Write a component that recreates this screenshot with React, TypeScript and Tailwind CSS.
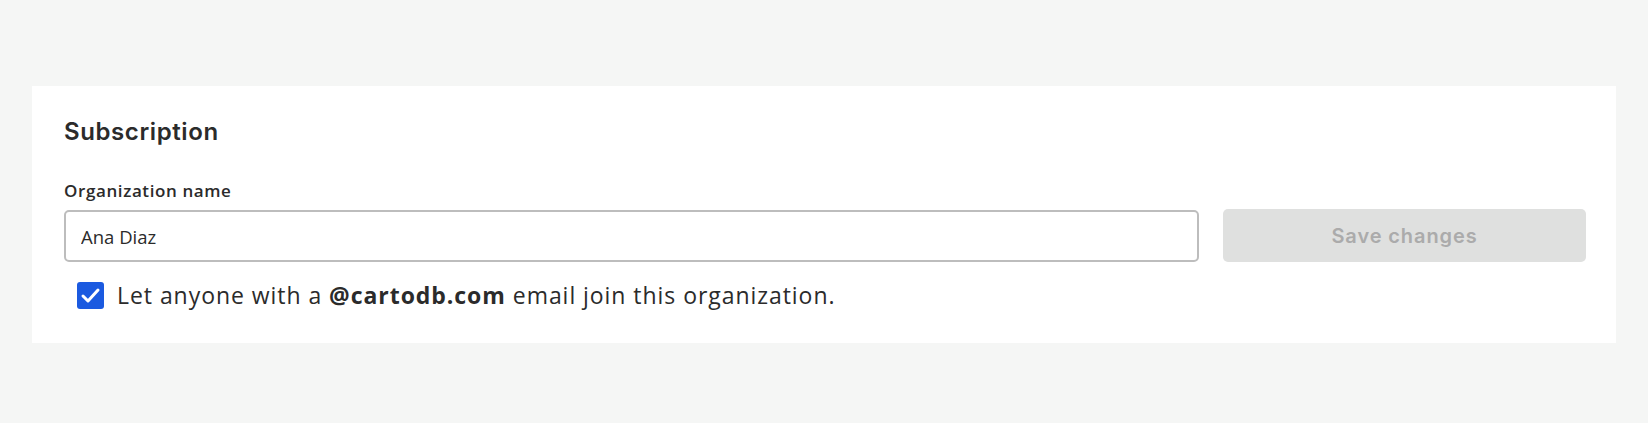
import React, { useState } from 'react';

const heading = { fontFamily: 'Inter, "Open Sans", sans-serif' };
const body = { fontFamily: '"Open Sans", "Noto Sans", sans-serif' };

export default function App() {
    const [name, setName] = useState('Ana Diaz');
    const [open, setOpen] = useState(true);

    return (
        <div className="min-h-screen bg-[#f5f6f5] px-8 pt-[86px] pb-20 text-[#2b2b2b]">
            <div className="bg-white pl-8 pr-[30px] pt-[30px] pb-[33px]">
                <h2 className="text-[24px] leading-[32px] font-semibold tracking-[0.6px]" style={heading}>Subscription</h2>

                <label className="block mt-[31px] text-[17px] leading-[24px] font-semibold tracking-[0.6px]" style={body}>Organization name</label>
                <div className="flex gap-6 mt-[7px]">
                    <input
                        value={name}
                        onChange={e => setName(e.target.value)}
                        className="flex-1 h-[52px] rounded-[5px] border-2 border-[#bdbdbd] px-[15px] text-[18.5px] text-[#2b2b2b] outline-none"
                        style={body}
                    />
                    <button disabled className="w-[363px] h-[53px] -mt-px rounded-[5px] bg-[#dfe0df] text-[20px] font-semibold tracking-[0.9px] text-[#ababab]" style={heading}>
                        Save changes
                    </button>
                </div>

                <label className="flex items-center gap-[13px] mt-[18px] pl-[13px] cursor-pointer" style={body}>
                    <span
                        onClick={() => setOpen(!open)}
                        className={`flex items-center justify-center w-[27px] h-[27px] rounded-[3px] ${open ? 'bg-[#1b5ae0]' : 'border-2 border-[#bdbdbd]'}`}
                    >
                        {open && (
                            <svg width="27" height="27" viewBox="0 0 27 27" fill="none">
                                <path d="M6 14l5 5L21 8" stroke="white" strokeWidth="3" strokeLinecap="round" strokeLinejoin="round" />
                            </svg>
                        )}
                    </span>
                    <span className="text-[23px] leading-[30px] tracking-[0.95px]">
                        Let anyone with a <b className="font-bold">@cartodb.com</b> email join this organization.
                    </span>
                </label>
            </div>
        </div>
    );
}
